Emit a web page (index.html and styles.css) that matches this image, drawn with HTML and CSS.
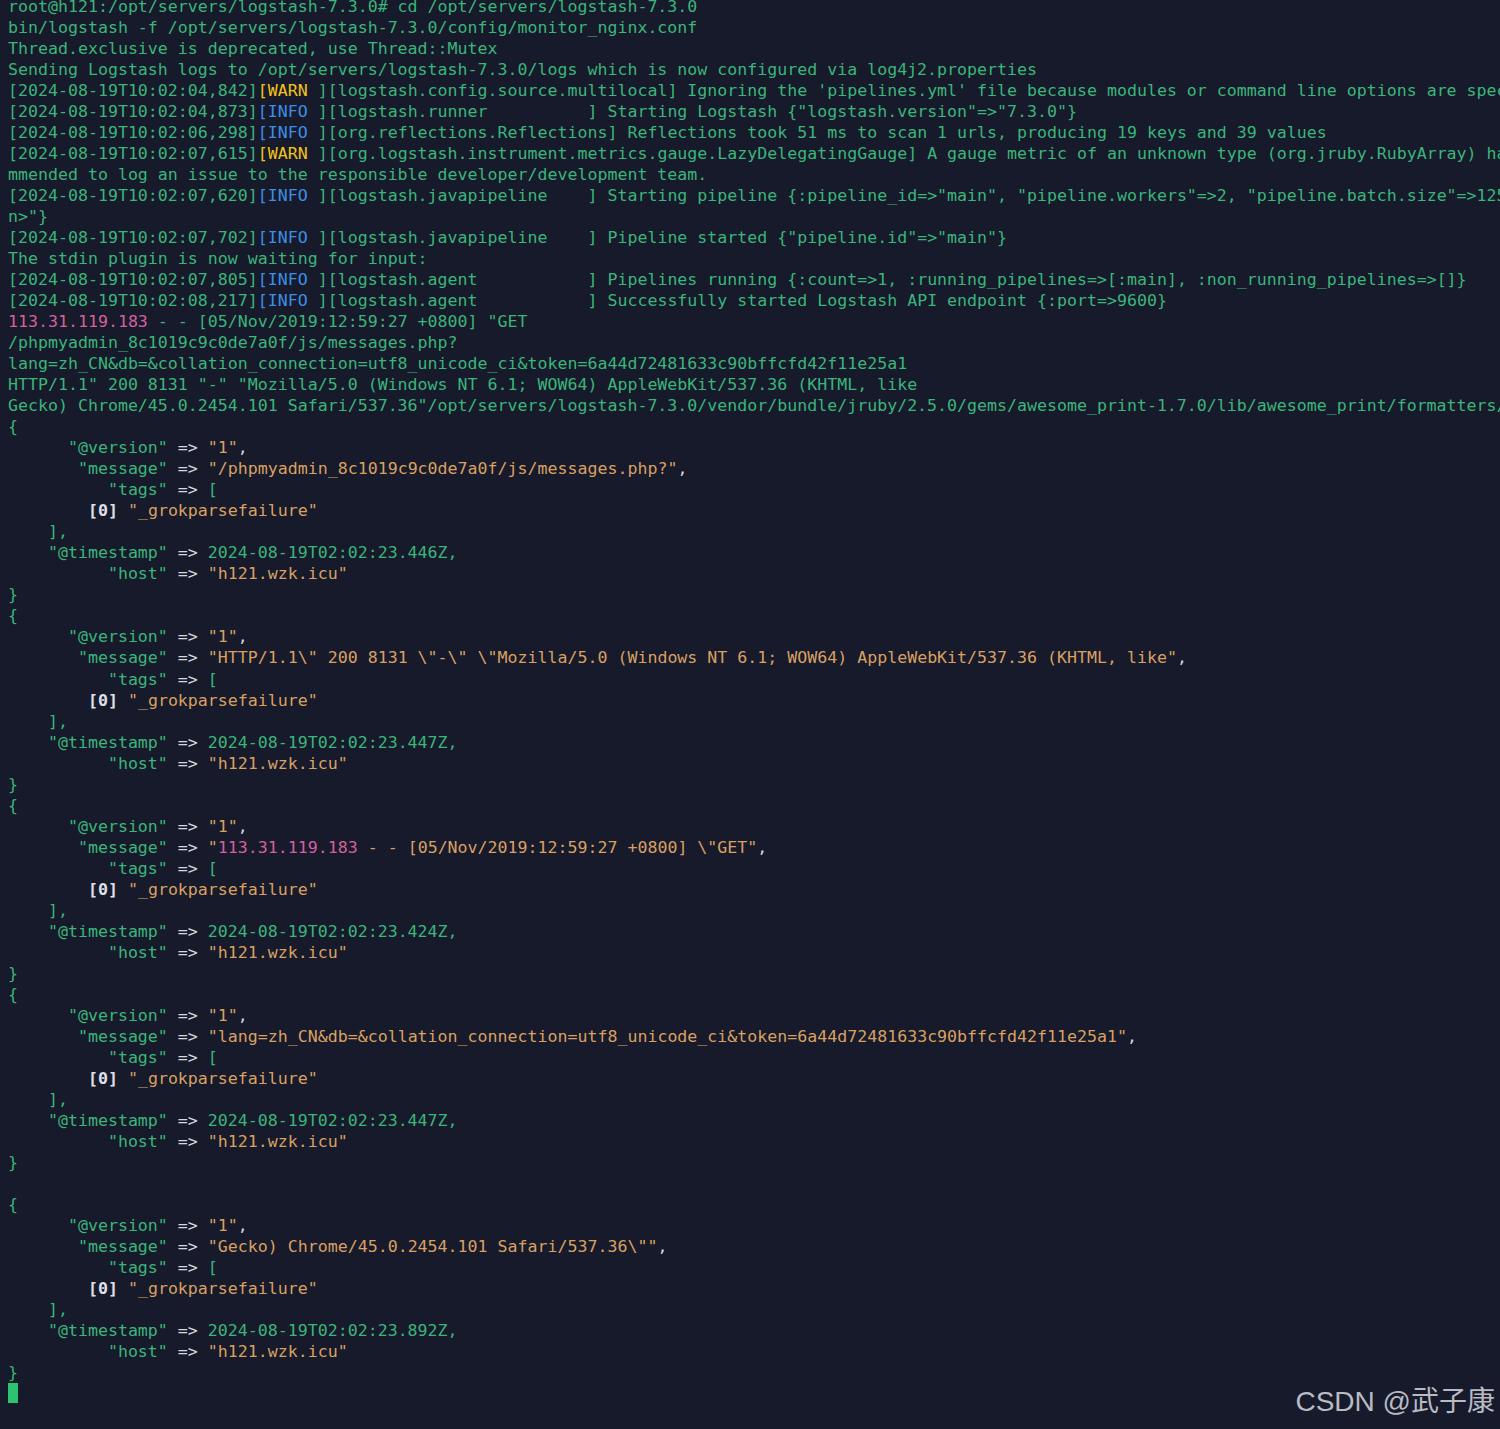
FILE: index.html
```html
<!DOCTYPE html>
<html lang="zh-CN">
<head>
    <meta charset="UTF-8">
    <meta name="viewport" content="width=device-width, initial-scale=1.0">
    <title>logstash - rubydebug</title>
    <link rel="stylesheet" href="styles.css">
</head>
<body>
    <div class="screen">
<pre class="term">root@h121:/opt/servers/logstash-7.3.0# cd /opt/servers/logstash-7.3.0
bin/logstash -f /opt/servers/logstash-7.3.0/config/monitor_nginx.conf
Thread.exclusive is deprecated, use Thread::Mutex
Sending Logstash logs to /opt/servers/logstash-7.3.0/logs which is now configured via log4j2.properties
[2024-08-19T10:02:04,842]<span class="warn">[WARN </span>][logstash.config.source.multilocal] Ignoring the 'pipelines.yml' file because modules or command line options are specified
[2024-08-19T10:02:04,873]<span class="info">[INFO </span>][logstash.runner          ] Starting Logstash {"logstash.version"=>"7.3.0"}
[2024-08-19T10:02:06,298]<span class="info">[INFO </span>][org.reflections.Reflections] Reflections took 51 ms to scan 1 urls, producing 19 keys and 39 values
[2024-08-19T10:02:07,615]<span class="warn">[WARN </span>][org.logstash.instrument.metrics.gauge.LazyDelegatingGauge] A gauge metric of an unknown type (org.jruby.RubyArray) has been create
mmended to log an issue to the responsible developer/development team.
[2024-08-19T10:02:07,620]<span class="info">[INFO </span>][logstash.javapipeline    ] Starting pipeline {:pipeline_id=>"main", "pipeline.workers"=>2, "pipeline.batch.size"=>125, "pipeline
n>"}
[2024-08-19T10:02:07,702]<span class="info">[INFO </span>][logstash.javapipeline    ] Pipeline started {"pipeline.id"=>"main"}
The stdin plugin is now waiting for input:
[2024-08-19T10:02:07,805]<span class="info">[INFO </span>][logstash.agent           ] Pipelines running {:count=>1, :running_pipelines=>[:main], :non_running_pipelines=>[]}
[2024-08-19T10:02:08,217]<span class="info">[INFO </span>][logstash.agent           ] Successfully started Logstash API endpoint {:port=>9600}
<span class="ip">113.31.119.183</span> - - [05/Nov/2019:12:59:27 +0800] "GET
/phpmyadmin_8c1019c9c0de7a0f/js/messages.php?
lang=zh_CN&amp;db=&amp;collation_connection=utf8_unicode_ci&amp;token=6a44d72481633c90bffcfd42f11e25a1
HTTP/1.1" 200 8131 "-" "Mozilla/5.0 (Windows NT 6.1; WOW64) AppleWebKit/537.36 (KHTML, like
Gecko) Chrome/45.0.2454.101 Safari/537.36"/opt/servers/logstash-7.3.0/vendor/bundle/jruby/2.5.0/gems/awesome_print-1.7.0/lib/awesome_print/formatters/
{
      "@version" <span class="op">=&gt;</span> <span class="str">"1"</span><span class="op">,</span>
       "message" <span class="op">=&gt;</span> <span class="str">"/phpmyadmin_8c1019c9c0de7a0f/js/messages.php?"</span><span class="op">,</span>
          "tags" <span class="op">=&gt;</span> [
        <span class="idx">[0]</span> <span class="str">"_grokparsefailure"</span>
    ],
    "@timestamp" <span class="op">=&gt;</span> 2024-08-19T02:02:23.446Z,
          "host" <span class="op">=&gt;</span> <span class="str">"h121.wzk.icu"</span>
}
{
      "@version" <span class="op">=&gt;</span> <span class="str">"1"</span><span class="op">,</span>
       "message" <span class="op">=&gt;</span> <span class="str">"HTTP/1.1\" 200 8131 \"-\" \"Mozilla/5.0 (Windows NT 6.1; WOW64) AppleWebKit/537.36 (KHTML, like"</span><span class="op">,</span>
          "tags" <span class="op">=&gt;</span> [
        <span class="idx">[0]</span> <span class="str">"_grokparsefailure"</span>
    ],
    "@timestamp" <span class="op">=&gt;</span> 2024-08-19T02:02:23.447Z,
          "host" <span class="op">=&gt;</span> <span class="str">"h121.wzk.icu"</span>
}
{
      "@version" <span class="op">=&gt;</span> <span class="str">"1"</span><span class="op">,</span>
       "message" <span class="op">=&gt;</span> <span class="str">"<span class="ip">113.31.119.183</span> - - [05/Nov/2019:12:59:27 +0800] \"GET"</span><span class="op">,</span>
          "tags" <span class="op">=&gt;</span> [
        <span class="idx">[0]</span> <span class="str">"_grokparsefailure"</span>
    ],
    "@timestamp" <span class="op">=&gt;</span> 2024-08-19T02:02:23.424Z,
          "host" <span class="op">=&gt;</span> <span class="str">"h121.wzk.icu"</span>
}
{
      "@version" <span class="op">=&gt;</span> <span class="str">"1"</span><span class="op">,</span>
       "message" <span class="op">=&gt;</span> <span class="str">"lang=zh_CN&amp;db=&amp;collation_connection=utf8_unicode_ci&amp;token=6a44d72481633c90bffcfd42f11e25a1"</span><span class="op">,</span>
          "tags" <span class="op">=&gt;</span> [
        <span class="idx">[0]</span> <span class="str">"_grokparsefailure"</span>
    ],
    "@timestamp" <span class="op">=&gt;</span> 2024-08-19T02:02:23.447Z,
          "host" <span class="op">=&gt;</span> <span class="str">"h121.wzk.icu"</span>
}

{
      "@version" <span class="op">=&gt;</span> <span class="str">"1"</span><span class="op">,</span>
       "message" <span class="op">=&gt;</span> <span class="str">"Gecko) Chrome/45.0.2454.101 Safari/537.36\""</span><span class="op">,</span>
          "tags" <span class="op">=&gt;</span> [
        <span class="idx">[0]</span> <span class="str">"_grokparsefailure"</span>
    ],
    "@timestamp" <span class="op">=&gt;</span> 2024-08-19T02:02:23.892Z,
          "host" <span class="op">=&gt;</span> <span class="str">"h121.wzk.icu"</span>
}
<span class="cursor"></span></pre>
        <div class="watermark">CSDN @武子康</div>
    </div>
</body>
</html>
```
FILE: styles.css
```css
html, body {
    margin: 0;
    padding: 0;
    height: 100%;
    overflow: hidden;
    background: #161a2b;
}

.screen {
    position: relative;
    height: 1429px;
    overflow: hidden;
    background: #161a2b;
}

.term {
    margin: -4px 0 0 0;
    padding: 0 0 0 8px;
    font-family: "DejaVu Sans Mono", "Liberation Mono", monospace;
    font-size: 16.6px;
    line-height: 21.02px;
    color: #3bb57a;
    white-space: pre;
}

.warn { color: #f2c318; }
.info { color: #3d8fe6; }
.ip { color: #d4609c; }
.str { color: #d9a062; }
.op { color: #d6d7de; }

.idx {
    color: #e0e0e8;
    font-weight: bold;
}

.cursor {
    display: inline-block;
    width: 10px;
    height: 20px;
    background: #2ec46e;
    vertical-align: -4px;
}

.watermark {
    position: absolute;
    right: 5px;
    bottom: 10px;
    font-family: "Liberation Sans", "Noto Sans CJK SC", sans-serif;
    font-size: 28px;
    color: #b9bac2;
}
```
